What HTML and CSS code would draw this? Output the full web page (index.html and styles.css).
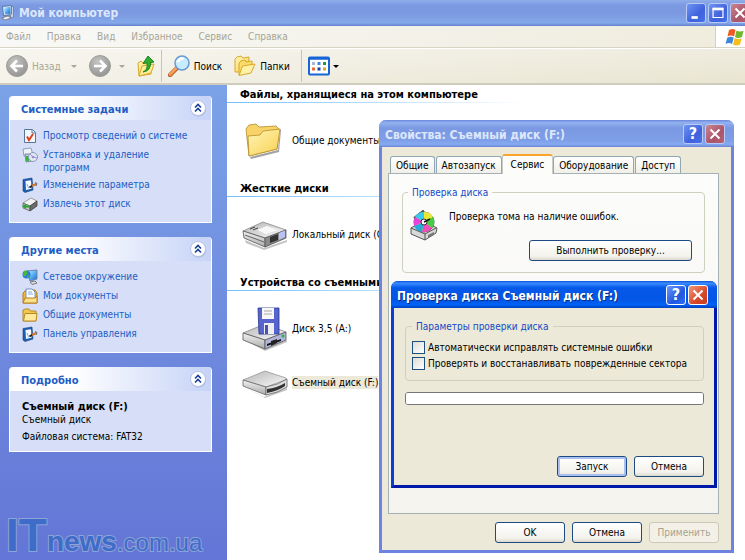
FILE: index.html
```html
<!DOCTYPE html>
<html lang="ru">
<head>
<meta charset="utf-8">
<title>Мой компьютер</title>
<link rel="stylesheet" href="styles.css">
</head>
<body>
<svg class="defs" aria-hidden="true">
  <defs>
    <linearGradient id="gold" x1="0" y1="0" x2="1" y2="1"><stop offset="0" stop-color="#fff6b8"/><stop offset="1" stop-color="#f8d050"/></linearGradient>
    <linearGradient id="metal" x1="0" y1="0" x2="1" y2="1"><stop offset="0" stop-color="#b4b4b4"/><stop offset="1" stop-color="#fafafa"/></linearGradient>
    <linearGradient id="side" x1="0" y1="0" x2="0" y2="1"><stop offset="0" stop-color="#f2f2f2"/><stop offset="1" stop-color="#aaa"/></linearGradient>
    <radialGradient id="round" cx=".4" cy=".3" r=".7"><stop offset="0" stop-color="#c4c4c2"/><stop offset="1" stop-color="#959593"/></radialGradient>
    <linearGradient id="screen" x1="0" y1="0" x2="1" y2="1"><stop offset="0" stop-color="#d8f2ff"/><stop offset=".5" stop-color="#58b4f4"/><stop offset="1" stop-color="#1c62c8"/></linearGradient>
    <symbol id="chevrons" viewBox="0 0 18 18"><circle cx="9.500" cy="10" r="7.500" fill="#8d9bc8" opacity=".6"/><circle cx="9" cy="9" r="7.500" fill="#fff" stroke="#b8c4e6"/><path d="M6 8.500l3-3 3 3M6 12.500l3-3 3 3" fill="none" stroke="#1a3f9c" stroke-width="1.600"/></symbol>
    <symbol id="control" viewBox="0 0 16 16"><path d="M1 2.500l9-1.500 1 12-8 2.500L1 14z" fill="#1d5fb4" stroke="#143f7c" stroke-width=".6"/><path d="M3.500 4l5.500-.800.500 8.500-5.500 1.300z" fill="#f4faff"/><path d="M5 7l1.500 4 2-1.500" fill="none" stroke="#7ab4e4"/><path d="M7.500 10.500l3-2" stroke="#222" stroke-width="1.800"/><path d="M10 9l4-2" stroke="#d8742c" stroke-width="2"/><path d="M13 5.500l2 1-1 2.500" fill="none" stroke="#666"/></symbol>
  </defs>
</svg>

<div class="window">
  <header class="titlebar">
    <svg class="title-icon" viewBox="0 0 16 16"><path d="M1.500 1.500l9-1v9l-8 1z" fill="#dbe6f4" stroke="#47689c" stroke-width=".8"/><path d="M3 2.500l6.500-.800v7L4 9z" fill="url(#screen)"/><path d="M10.500 1l2 1v10l-2.500 1-1-3 1.500-1z" fill="#c9d4e4" stroke="#54698a" stroke-width=".6"/><path d="M1 13l6-2 3 2-6 2z" fill="#f4f4f4" stroke="#667" stroke-width=".7"/></svg>
    <h1>Мой компьютер</h1>
    <div class="caption-buttons">
      <button class="caption" aria-label="Свернуть"><svg viewBox="0 0 20 20"><path d="M5 15h7" stroke="#fff" stroke-width="3"/></svg></button>
      <button class="caption" aria-label="Развернуть"><svg viewBox="0 0 20 20"><path d="M4.500 5h11v10h-11z" fill="none" stroke="#fff" stroke-width="1.300"/><path d="M4 5.500h12" stroke="#fff" stroke-width="3"/></svg></button>
      <button class="caption close" aria-label="Закрыть"><svg viewBox="0 0 20 20"><path d="M5 5l10 10M15 5L5 15" stroke="#fff" stroke-width="2.200"/></svg></button>
    </div>
  </header>

  <div class="menubar">
    <nav class="menu">
      <button>Файл</button><button>Правка</button><button>Вид</button><button>Избранное</button><button>Сервис</button><button>Справка</button>
    </nav>
    <div class="flag">
      <svg viewBox="0 0 20 18"><path d="M4 2q4-2 6.500 0L9 8.500q-3-2-6.500 0z" fill="#ee5a22"/><path d="M11.500 2.500q3.500 2 7 0L17 9q-4 2-7 0z" fill="#72b82e"/><path d="M2.200 9.800q3.500-2 6.500 0L7 16q-3-2-6.500 0z" fill="#3d86dc"/><path d="M9.700 10q3.500 2 7 .2L15 16.500q-4 2-7 0z" fill="#f6bd1c"/></svg>
    </div>
  </div>

  <div class="toolbar">
    <button class="tool back" disabled>
      <svg class="i22" viewBox="0 0 22 22"><circle cx="11" cy="11" r="10.500" fill="url(#round)" stroke="#9b9b98"/><path d="M17 11H6M11 5.500L5.500 11l5.500 5.500" fill="none" stroke="#fff" stroke-width="2.600"/></svg>
      <span>Назад</span><i class="arrow"></i>
    </button>
    <button class="tool forward" disabled aria-label="Вперед">
      <svg class="i22" viewBox="0 0 22 22"><circle cx="11" cy="11" r="10.500" fill="url(#round)" stroke="#9b9b98"/><path d="M5 11h11M11 5.500l5.500 5.500-5.500 5.500" fill="none" stroke="#fff" stroke-width="2.600"/></svg>
      <i class="arrow"></i>
    </button>
    <button class="tool up" aria-label="Вверх">
      <svg class="i22" viewBox="0 0 22 22"><path d="M3 8l3-2 2 2 8-1v12l-12 2z" fill="url(#gold)" stroke="#d8a82a"/><path d="M4 21l3-10 12-2-3 9z" fill="#ffee98" stroke="#d8a82a"/><path d="M8 17q5-2 4-9l-4 .5 5-7.500 6 6-3.500.500Q16 16 8 17z" fill="#2fae2d" stroke="#157a1e" stroke-width=".9"/></svg>
    </button>
    <span class="divider"></span>
    <button class="tool search">
      <svg class="i22" viewBox="0 0 22 22"><path d="M2 20l7-7" stroke="#b8622e" stroke-width="4.500" stroke-linecap="round"/><path d="M2 19.500l6.500-6.500" stroke="#f8a25a" stroke-width="2.500" stroke-linecap="round"/><circle cx="14" cy="8" r="7" fill="#c8ecff" stroke="#6a98cf" stroke-width="1.500"/><path d="M9.500 7q2-4 6-3.500" fill="none" stroke="#fff" stroke-width="2.500"/></svg>
      <span>Поиск</span>
    </button>
    <button class="tool folders">
      <svg class="i22" viewBox="0 0 22 22"><path d="M1 17V4l2-2 4-1 2 2 6-1v3L6 17z" fill="url(#gold)" stroke="#d8a82a"/><path d="M5 20V8l2-2 4-1 1 2 6-1v3z" fill="#fbdc6a" stroke="#d8a82a"/><path d="M5 20.500L8.500 11 21 9l-4 9z" fill="#fff2a6" stroke="#d8a82a"/></svg>
      <span>Папки</span>
    </button>
    <span class="divider"></span>
    <button class="tool views" aria-label="Вид">
      <svg class="i22" viewBox="0 0 22 20"><rect x="1" y="1.500" width="20" height="17" rx="1" fill="#fff" stroke="#1764d6" stroke-width="2"/><path d="M1 2.500h20" stroke="#1764d6" stroke-width="2.500"/><path d="M4 7.500h3" stroke="#a9b4da" stroke-width="3"/><path d="M9.500 7.500h3" stroke="#3a87e6" stroke-width="3"/><path d="M15 7.500h3" stroke="#279a35" stroke-width="3"/><path d="M4 13h3" stroke="#e8663c" stroke-width="3"/><path d="M9.500 13h3" stroke="#163f9c" stroke-width="3"/><path d="M15 13h3" stroke="#d9a81f" stroke-width="3"/></svg>
      <i class="arrow"></i>
    </button>
  </div>

  <div class="main">
    <aside class="sidebar">
      <section class="panel">
        <header><h2>Системные задачи</h2><button aria-label="Скрыть"><svg viewBox="0 0 18 18"><use href="#chevrons"/></svg></button></header>
        <ul>
          <li><svg viewBox="0 0 16 16"><path d="M2.500 1.500h8l3 3v10h-11z" fill="#f2f7fc" stroke="#57749c"/><path d="M10 2v3h3" fill="none" stroke="#57749c"/><path d="M5 8.500l2 3.500 4-6" fill="none" stroke="#e04020" stroke-width="2"/></svg><a href="#">Просмотр сведений о системе</a></li>
          <li><svg viewBox="0 0 16 16"><path d="M1 2l8-1 2 7-9 1z" fill="#eef3fa" stroke="#8d9fb8"/><path d="M3 7h7v7l-6 1z" fill="#c5cddd" stroke="#7c8aa5"/><path d="M4 9h3v5H4z" fill="#36b43a"/><circle cx="11" cy="10" r="4.500" fill="#dfe8f4" stroke="#8a9bb8"/><circle cx="11" cy="10" r="1.300" fill="#7d8fb4"/><path d="M8 7l3 3 4 1" stroke="#b18de0" fill="none"/></svg><a href="#">Установка и удаление программ</a></li>
          <li><svg viewBox="0 0 16 16"><use href="#control"/></svg><a href="#">Изменение параметра</a></li>
          <li><svg viewBox="0 0 16 16"><path d="M1 7l8-5 6 3-7 5z" fill="#f2f2f2" stroke="#888" stroke-width=".8"/><path d="M1 7l7 3v5l-7-3z" fill="#c4c4c4" stroke="#666" stroke-width=".8"/><path d="M8 10l7-5v5l-7 5z" fill="#6a6a6a" stroke="#444" stroke-width=".8"/><path d="M0 10l4-2v1.500h3v2H4V13z" fill="#27a72b"/></svg><a href="#">Извлечь этот диск</a></li>
        </ul>
      </section>
      <section class="panel">
        <header><h2>Другие места</h2><button aria-label="Скрыть"><svg viewBox="0 0 18 18"><use href="#chevrons"/></svg></button></header>
        <ul>
          <li><svg viewBox="0 0 16 16"><path d="M5 2l10-1v9l-7 2z" fill="url(#screen)" stroke="#6b83ad"/><path d="M8 13l5-1 2 2-5 1.500z" fill="#ddd" stroke="#777"/><circle cx="4.500" cy="5.500" r="4" fill="#2a7de0"/><path d="M2 2q5-1 3 3T1 6zM5 7l3-1-2 3z" fill="#48b838"/></svg><a href="#">Сетевое окружение</a></li>
          <li><svg viewBox="0 0 16 16"><path d="M1 5l3-3h9l2 3v10H1z" fill="#f2b83a" stroke="#b57e1c"/><path d="M4 1h6l3 3v7H4z" fill="#fff" stroke="#6d92c2"/><path d="M6 4h4M6 6h5" stroke="#79a8dc"/><path d="M1 15l2-5h10l2-2v7z" fill="#fbe08a" stroke="#b57e1c"/></svg><a href="#">Мои документы</a></li>
          <li><svg viewBox="0 0 16 16"><path d="M1 14V3l2-1h4l1.500 2H14v10z" fill="#f3c74a" stroke="#b98a24"/><path d="M1.500 14L3 6.500h12L14 14z" fill="#fdea9c" stroke="#b98a24"/></svg><a href="#">Общие документы</a></li>
          <li><svg viewBox="0 0 16 16"><use href="#control"/></svg><a href="#">Панель управления</a></li>
        </ul>
      </section>
      <section class="panel">
        <header><h2>Подробно</h2><button aria-label="Скрыть"><svg viewBox="0 0 18 18"><use href="#chevrons"/></svg></button></header>
        <div class="details"><b>Съемный диск (F:)</b><span>Съемный диск</span><p>Файловая система: FAT32</p></div>
      </section>
      <div class="watermark"><span class="wm-it">IT</span><span class="wm-news">news</span><span class="wm-com">.com.ua</span></div>
    </aside>

    <main class="content">
      <section>
        <h2>Файлы, хранящиеся на этом компьютере</h2>
        <div class="tile"><svg viewBox="0 0 48 48"><path d="M9 41l28-7 2-21 1 1-2 22-28 7z" fill="#666" opacity=".6"/><path d="M5 13l3-4 7-1 3 3 17-1 3 3-2 20-28 7z" fill="#f8d468" stroke="#b08a2a" stroke-width=".8"/><path d="M7 20l12-1 3-4 17-2-3 20-28 7z" fill="url(#gold)" stroke="#b98c22" stroke-width=".8"/></svg><span>Общие документы</span></div>
      </section>
      <section>
        <h2>Жесткие диски</h2>
        <div class="tile"><svg viewBox="0 0 48 48"><path d="M4 30l19 8 23-8v2L23 40 5 33z" fill="#888" opacity=".5"/><path d="M2 21l20-9 23 8-21 8z" fill="url(#metal)" stroke="#888" stroke-width=".8"/><path d="M2 21l22 7v9L3 28z" fill="url(#side)" stroke="#555" stroke-width=".8"/><path d="M24 28l21-8v8l-21 9z" fill="#8a8a8e" stroke="#555" stroke-width=".8"/><path d="M38 23l6-2.500v6.500l-6 3z" fill="#b9c2f2"/><path d="M29 27l8-3v6l-8 3z" fill="#333"/><path d="M4 25l19 7" stroke="#666"/><path d="M9 19l5-2M12 20l5-2" stroke="#444"/><path d="M16 20l10-4 11 4-12 4z" fill="#f8f8f8"/></svg><span>Локальный диск (C:)</span></div>
      </section>
      <section>
        <h2>Устройства со съемными носителями</h2>
        <div class="tile"><svg viewBox="0 0 48 48"><path d="M4 36l20 9 22-9v2L24 47z" fill="#888" opacity=".5"/><path d="M2 29l22-9 21 8-21 8z" fill="url(#metal)" stroke="#888" stroke-width=".8"/><path d="M2 29l22 7v9L2 36z" fill="url(#side)" stroke="#555" stroke-width=".8"/><path d="M24 36l21-8v8l-21 9z" fill="#b2b4da" stroke="#555" stroke-width=".8"/><path d="M26 40l14-5v2l-14 5z" fill="#111"/><path d="M30 37l6-2v4l-6 3z" fill="#222"/><circle cx="42" cy="32" r="1.500" fill="#20b838"/><path d="M17 4h21v26H18z" fill="#5864cd" stroke="#27328d" stroke-width=".8"/><path d="M21 4h12v11H21z" fill="#f7f7f7"/><path d="M23 7h8M23 10h8" stroke="#aaa"/><path d="M23 19h10v11H23z" fill="#eee"/><path d="M24 21h3v9h-3z" fill="#4453b5"/></svg><span>Диск 3,5 (A:)</span></div>
        <div class="tile"><svg viewBox="0 0 48 48"><path d="M5 30l18 9 23-9v2L24 40z" fill="#888" opacity=".5"/><path d="M2 22l22-9 21 7q1 1-1 2l-19 7z" fill="url(#metal)" stroke="#999" stroke-width=".8"/><path d="M2 22l23 7v8L2 28z" fill="url(#side)" stroke="#666" stroke-width=".8"/><path d="M25 29q12-2 21-8v8q-9 6-21 8z" fill="#ddd" stroke="#666" stroke-width=".8"/><path d="M26 31q10-1 18-6v3q-7 5-18 7z" fill="#333"/></svg><span class="selected">Съемный диск (F:)</span></div>
      </section>
    </main>
  </div>
</div>

<section class="dialog properties" aria-label="Свойства">
  <header class="dialog-title"><h2>Свойства: Съемный диск (F:)</h2>
    <button class="caption help" aria-label="Справка">?</button>
    <button class="caption close" aria-label="Закрыть"><svg viewBox="0 0 20 20"><path d="M5 5l10 10M15 5L5 15" stroke="#fff" stroke-width="2.200"/></svg></button>
  </header>
  <div class="dialog-body">
    <div class="tabs" role="tablist">
      <button role="tab">Общие</button><button role="tab">Автозапуск</button><button role="tab" class="active" aria-selected="true">Сервис</button><button role="tab">Оборудование</button><button role="tab">Доступ</button>
    </div>
    <div class="tab-page">
      <fieldset class="check-disk">
        <legend>Проверка диска</legend>
        <div class="check-row">
          <svg viewBox="0 0 32 32"><path d="M3 18l12-7 14 7-1 5-11 7L3 24z" fill="#d8d8d8" stroke="#555"/><path d="M3 18l14 6v6M17 24l11-6" fill="none" stroke="#555"/><path d="M20 25l6-3v3l-6 3z" fill="#777"/><path d="M6 8l9-7 1 3" fill="none" stroke="#555" stroke-width="2"/><circle cx="16" cy="12" r="10" fill="#ffe62b" stroke="#555"/><path d="M16 12L7 7q3-5 9-5z" fill="#38c8f0"/><path d="M16 12V2q7 0 9 5z" fill="#e8e838"/><path d="M16 12l9-5q3 6-1 11z" fill="#42cf46"/><path d="M16 12l8 6q-4 5-10 4z" fill="#f24cba"/><path d="M16 12l-2 10q-6-1-8-6z" fill="#28a8d8"/><path d="M16 12L6 16q-1-5 1-9z" fill="#e642d8"/><circle cx="16" cy="12" r="3" fill="#fff" stroke="#333"/><path d="M16 12l6-3" stroke="#111" stroke-width="1.500"/></svg>
          <span>Проверка тома на наличие ошибок.</span>
        </div>
        <button class="push run">Выполнить проверку...</button>
      </fieldset>
    </div>
    <div class="actions"><button class="push">OK</button><button class="push">Отмена</button><button class="push" disabled>Применить</button></div>
  </div>
</section>

<section class="dialog scan" aria-label="Проверка диска">
  <header class="dialog-title"><h2>Проверка диска Съемный диск (F:)</h2>
    <button class="caption help" aria-label="Справка">?</button>
    <button class="caption close" aria-label="Закрыть"><svg viewBox="0 0 20 20"><path d="M5 5l10 10M15 5L5 15" stroke="#fff" stroke-width="2.200"/></svg></button>
  </header>
  <div class="dialog-body">
    <fieldset>
      <legend>Параметры проверки диска</legend>
      <label><input type="checkbox">Автоматически исправлять системные ошибки</label>
      <label><input type="checkbox">Проверять и восстанавливать поврежденные сектора</label>
    </fieldset>
    <progress max="100" value="0" aria-label="Ход проверки"></progress>
    <div class="actions"><button class="push default">Запуск</button><button class="push">Отмена</button></div>
  </div>
</section>
</body>
</html>
```
FILE: styles.css
```css
* { box-sizing: border-box; }
html, body { height: 100%; margin: 0; }
body, button, input {
  font-family: "DejaVu Sans Condensed", "DejaVu Sans", sans-serif;
  font-size: 10px;
  line-height: 13px;
}
body { position: relative; overflow: hidden; background: #fff; color: #000; }
button { margin: 0; padding: 0; border: 0; background: none; color: inherit; white-space: nowrap; }
h1, h2, p, ul { margin: 0; padding: 0; }
svg { display: block; flex: none; }
.defs { position: absolute; width: 0; height: 0; }

.window { display: flex; flex-direction: column; height: 100%; }

.titlebar {
  display: flex; align-items: center; height: 26px; flex: none; padding-left: 1px; gap: 2px;
  background: linear-gradient(#90aee8 0, #7b9ae2 20%, #7b98e0 50%, #84a8ea 88%, #6580d0 100%);
}
.title-icon { width: 16px; height: 16px; }
h1, .dialog-title h2 { flex: 1; font-size: 12px; line-height: 16px; font-weight: bold; color: #dde7fa; white-space: nowrap; }
.caption-buttons { display: flex; gap: 2px; margin-right: -5px; }
.caption {
  width: 20px; height: 20px; flex: none; border: 1px solid #b9caf5; border-radius: 3px; color: #fff;
  background: linear-gradient(135deg, #6f94f2, #3f62dc 60%, #4670e8);
}
.caption svg { width: 18px; height: 18px; }
.caption.close { background: linear-gradient(135deg, #cc8590, #a9556b 60%, #b8616f); }
.caption.help { font-size: 16px; line-height: 18px; font-weight: bold; }

.menubar { display: flex; height: 22px; flex: none; background: linear-gradient(90deg, #f8f8f6, #efecdd); border-bottom: 1px solid #d8d4c4; }
.menu { display: flex; align-items: center; flex: 1; gap: 16px; padding-left: 6px; color: #a8a595; }
.flag { display: flex; align-items: center; width: 30px; padding-left: 9px; background: #fff; border-left: 1px solid #d5d1bf; }
.flag svg { width: 20px; height: 18px; }

.toolbar {
  display: flex; align-items: center; height: 37px; flex: none; padding-left: 6px;
  background: linear-gradient(90deg, rgba(255,255,255,.5), rgba(255,255,255,0)), linear-gradient(#efecdf, #e9e5d2);
  border-top: 1px solid #fff; border-bottom: 2px solid #cfccbd;
}
.tool { display: flex; align-items: center; gap: 4px; }
.i22 { width: 22px; height: 22px; }
.tool:disabled { color: #aaa797; }
.arrow { border: 3px solid transparent; border-top-color: currentColor; border-bottom: 0; }
.back .arrow { margin-left: 6px; }
.forward { margin-left: 12px; gap: 8px; }
.up { margin-left: 10px; }
.divider { align-self: stretch; width: 1px; margin: 1px 6px 1px 4px; background: #c9c5b4; }
.folders { margin-left: 12px; }
.folders + .divider { margin: 1px 6px 1px 11px; }
.views { gap: 3px; }

.main { display: flex; flex: 1; min-height: 0; }
.sidebar {
  position: relative; display: flex; flex-direction: column; gap: 14px; width: 227px; flex: none;
  padding: 11px 15px 0 9px; background: linear-gradient(#7ba2e7, #6375d6);
}
.panel { border-radius: 4px 4px 0 0; border: 1px solid #fff; border-top: 0; background: #d6dff7; }
.panel header {
  display: flex; align-items: center; justify-content: space-between; height: 24px; padding: 0 4px 0 11px;
  border-radius: 4px 4px 0 0; background: linear-gradient(90deg, #fff 30%, #c6d3f7);
}
.panel h2 { font-size: 11px; line-height: 13px; color: #215dc6; padding-top: 3px; }
.panel header svg { width: 18px; height: 18px; }
.panel ul { display: flex; flex-direction: column; gap: 3px; padding: 8px 20px 10px 12px; list-style: none; }
.panel li { display: flex; gap: 5px; min-height: 16px; }
.panel li svg { width: 16px; height: 16px; }
.panel a { padding-top: 1px; color: #215dc6; text-decoration: none; }
.details { display: flex; flex-direction: column; padding: 9px 12px 8px; }
.details b { font-size: 11px; }
.details p { margin-top: 4px; }

.watermark {
  position: absolute; left: 6px; bottom: -3px; display: flex; align-items: baseline;
  font-family: "Liberation Sans", sans-serif; font-weight: bold; line-height: 40px;
  color: #3e6cc8; -webkit-text-stroke: 2px #8ea3d6; paint-order: stroke fill;
}
.wm-it { font-size: 46px; }
.wm-news { font-size: 28px; }
.wm-com { font-size: 24px; font-weight: normal; }

.content { flex: 1; min-width: 0; }
.content section { padding-bottom: 12px; }
.content h2 {
  height: 18px; margin-bottom: 10px; padding: 3px 0 0 13px; font-size: 11px; line-height: 13px; white-space: nowrap;
  border-bottom: 1px solid; border-image: linear-gradient(90deg, #70bfff, #fff 300px) 1;
}
.tile { display: flex; align-items: center; gap: 3px; height: 54px; padding-left: 14px; white-space: nowrap; }
.tile svg { width: 48px; height: 48px; }
.selected { background: #ece9d8; }

.dialog { position: absolute; border: 3px solid #6e82e0; border-top: 0; border-radius: 7px 7px 0 0; background: #ece9d8; }
.dialog-title { display: flex; align-items: center; gap: 2px; height: 27px; margin: 0 -3px; padding: 0 9px 0 6px; border-radius: 7px 7px 0 0; }
.dialog-title h2 { padding-top: 2px; }
.properties { left: 379px; top: 120px; width: 355px; }
.properties .dialog-title { background: linear-gradient(#6e86dc 0, #92b2f0 10%, #7b98e2 30%, #7e9fe8 75%, #86aaf0 90%, #6a84d8 100%); }
.properties .dialog-body { padding: 6px 12px 7px 6px; }
.tabs { display: flex; align-items: flex-end; gap: 1px; height: 20px; padding-left: 2px; }
.tabs button { height: 17px; padding: 0 5px; border: 1px solid #91a7b4; border-bottom: 0; border-radius: 3px 3px 0 0; background: linear-gradient(#fff, #f0efe8); }
.tabs .active { position: relative; height: 20px; margin: 0 -1px -1px; padding: 0 8px 2px; border-color: #c9cbc4; border-top: 2px solid #f9a52b; background: #fcfcfa; z-index: 1; }
.tab-page { height: 341px; padding: 12px 13px; border: 1px solid #a5b1b4; background: linear-gradient(#fcfcfb, #f4f3ee); }
fieldset { min-width: 0; margin: 0; border: 1px solid #d0d0bf; border-radius: 4px; }
legend { padding: 0 4px; color: #1549c8; }
.check-disk { display: flex; flex-direction: column; padding: 11px 12px 11px 5px; }
.check-row { display: flex; gap: 9px; height: 30px; }
.check-row svg { width: 32px; height: 32px; }
.push {
  width: 70px; height: 21px; border: 1px solid #1d4a82; border-radius: 3px;
  background: linear-gradient(#fff, #f3f2ec 80%, #dcd8cc);
}
.push:disabled { color: #a5a292; border-color: #cbc8b8; background: #f3f1e7; }
.push.default { box-shadow: inset 0 0 0 2px #a9c0f0; }
.run { width: 163px; align-self: flex-end; }
.actions { display: flex; justify-content: flex-end; gap: 7px; }
.properties .actions { padding-top: 8px; }

.scan { left: 391px; top: 281px; width: 326px; border-color: #0a3fd6; border-right-color: #0019a8; border-bottom-color: #0019a8; }
.scan .dialog-title { background: linear-gradient(#0a50d8 0, #3a8cff 8%, #0658e8 25%, #0356e6 70%, #0062f5 88%, #0040c0 100%); }
.scan .dialog-title h2 { color: #fff; text-shadow: 1px 1px 0 #0a2a80; }
.scan .caption { border-color: #fff; background: linear-gradient(135deg, #6b98ff, #2257e0 60%, #2f6cf5); }
.scan .close { background: linear-gradient(135deg, #f09a80, #d8482a 60%, #c83c1e); }
.scan .dialog-body { padding: 12px 10px 8px 11px; }
.scan fieldset { display: flex; flex-direction: column; gap: 3px; padding: 8px 6px 10px; }
.scan label { display: flex; align-items: center; gap: 3px; white-space: nowrap; }
input[type="checkbox"] { appearance: none; width: 13px; height: 13px; margin: 0; flex: none; border: 1px solid #1c5180; background: linear-gradient(135deg, #dcdcd7, #fff); }
progress { appearance: none; display: block; width: 100%; height: 13px; margin: 11px 0 51px; border: 1px solid #777; border-radius: 3px; background: #fff; overflow: hidden; }
progress::-webkit-progress-bar { background: #fff; }
```
